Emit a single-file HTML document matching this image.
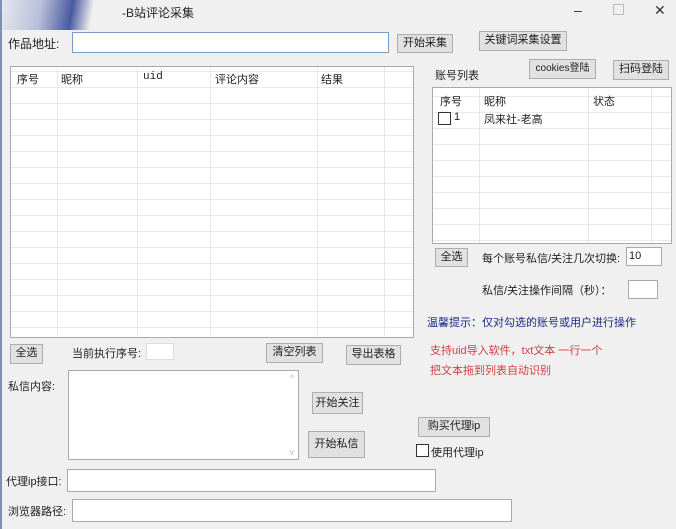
<!DOCTYPE html>
<html><head><meta charset="utf-8"><style>
body{margin:0;width:676px;height:529px;background:#f0f0f0;position:relative;overflow:hidden;font-family:"Liberation Sans","Noto Sans CJK SC",sans-serif;font-size:11px;color:#222}
.a{position:absolute;white-space:nowrap}
.in{position:absolute;background:#fff;border:1px solid #a9a9a9;box-sizing:border-box}
.bt{position:absolute;background:#e1e1e1;border:1px solid #adadad;box-sizing:border-box;text-align:center;font-size:11px;line-height:17px}
.grid{position:absolute;background:#fff;border:1px solid #a9a9a9;box-sizing:border-box;
background-image:linear-gradient(#eaeaea 1px,transparent 1px);background-size:100% 16px}
.vl{position:absolute;top:0;bottom:0;width:1px;background:#e6e6e6}
.cb{position:absolute;width:11px;height:11px;border:1px solid #333;background:#fff}
</style></head><body>
<div class="a" style="left:0;top:0;width:100px;height:30px;background:linear-gradient(100deg,#e8eaf0 0%,#b8bfd8 40%,#4a5aa0 70%,#f0f0f0 90%)"></div>
<div style="position:absolute;left:0;top:0;width:2px;height:529px;background:#8090b0"></div>
<div class="a" style="left:122px;top:4px;font-size:12px">-B站评论采集</div>
<div class="a" style="left:574px;top:2px;font-size:14px;color:#333">–</div>
<div class="a" style="left:613px;top:4px;width:9px;height:9px;border:1px solid #bbb"></div>
<div class="a" style="left:654px;top:2px;font-size:14px;color:#333">✕</div>

<div class="a" style="left:8px;top:35px;font-size:12px">作品地址:</div>
<div class="in" style="left:72px;top:32px;width:317px;height:21px;border-color:#7a9cc6"></div>
<div class="bt" style="left:397px;top:34px;width:56px;height:19px">开始采集</div>
<div class="bt" style="left:479px;top:31px;width:88px;height:20px">关键词采集设置</div>

<div class="grid" style="left:10px;top:66px;width:404px;height:272px;background-position:0 20px">
<div class="vl" style="left:46px"></div><div class="vl" style="left:126px"></div><div class="vl" style="left:199px"></div><div class="vl" style="left:306px"></div><div class="vl" style="left:373px"></div>
<div class="a" style="left:6px;top:4px">序号</div><div class="a" style="left:50px;top:4px">昵称</div><div class="a" style="left:132px;top:4px;font-family:'Liberation Mono',monospace">uid</div><div class="a" style="left:204px;top:4px">评论内容</div><div class="a" style="left:310px;top:4px">结果</div>
</div>

<div class="a" style="left:435px;top:67px">账号列表</div>
<div class="bt" style="left:529px;top:59px;width:67px;height:20px;font-size:10px">cookies登陆</div>
<div class="bt" style="left:613px;top:60px;width:56px;height:20px">扫码登陆</div>
<div class="grid" style="left:432px;top:87px;width:240px;height:157px;background-position:0 8px">
<div class="vl" style="left:46px"></div><div class="vl" style="left:155px"></div><div class="vl" style="left:218px"></div>
<div class="a" style="left:7px;top:5px">序号</div><div class="a" style="left:51px;top:5px">昵称</div><div class="a" style="left:160px;top:5px">状态</div>
<div class="cb" style="left:5px;top:24px"></div><div class="a" style="left:21px;top:23px">1</div><div class="a" style="left:51px;top:23px">凤来社-老高</div>
</div>
<div class="bt" style="left:435px;top:248px;width:33px;height:19px">全选</div>
<div class="a" style="left:482px;top:250px">每个账号私信/关注几次切换:</div>
<div class="in" style="left:626px;top:247px;width:36px;height:19px;font-size:11px;padding-left:2px;line-height:16px">10</div>
<div class="a" style="left:482px;top:282px">私信/关注操作间隔（秒）：</div>
<div class="in" style="left:628px;top:280px;width:30px;height:19px"></div>
<div class="a" style="left:427px;top:314px;color:#1a2a8a">温馨提示：仅对勾选的账号或用户进行操作</div>
<div class="a" style="left:430px;top:342px;color:#d04040">支持uid导入软件，txt文本 一行一个</div>
<div class="a" style="left:430px;top:362px;color:#d04040">把文本拖到列表自动识别</div>

<div class="bt" style="left:10px;top:344px;width:33px;height:20px">全选</div>
<div class="a" style="left:72px;top:345px">当前执行序号:</div>
<div class="in" style="left:146px;top:343px;width:28px;height:17px;border-color:#ddd"></div>
<div class="bt" style="left:266px;top:343px;width:57px;height:20px">清空列表</div>
<div class="bt" style="left:346px;top:345px;width:55px;height:20px">导出表格</div>

<div class="a" style="left:8px;top:378px">私信内容:</div>
<div class="in" style="left:68px;top:370px;width:231px;height:90px"><div class="a" style="right:4px;top:2px;color:#bbb;font-size:9px">^</div><div class="a" style="right:4px;bottom:2px;color:#bbb;font-size:9px">v</div></div>
<div class="bt" style="left:312px;top:392px;width:51px;height:22px;line-height:20px">开始关注</div>
<div class="bt" style="left:308px;top:431px;width:57px;height:27px;line-height:25px">开始私信</div>
<div class="bt" style="left:418px;top:417px;width:72px;height:20px">购买代理ip</div>
<div class="cb" style="left:416px;top:444px"></div>
<div class="a" style="left:431px;top:444px">使用代理ip</div>

<div class="a" style="left:6px;top:473px">代理ip接口:</div>
<div class="in" style="left:67px;top:469px;width:369px;height:23px"></div>
<div class="a" style="left:8px;top:503px">浏览器路径:</div>
<div class="in" style="left:72px;top:499px;width:440px;height:23px"></div>
</body></html>
